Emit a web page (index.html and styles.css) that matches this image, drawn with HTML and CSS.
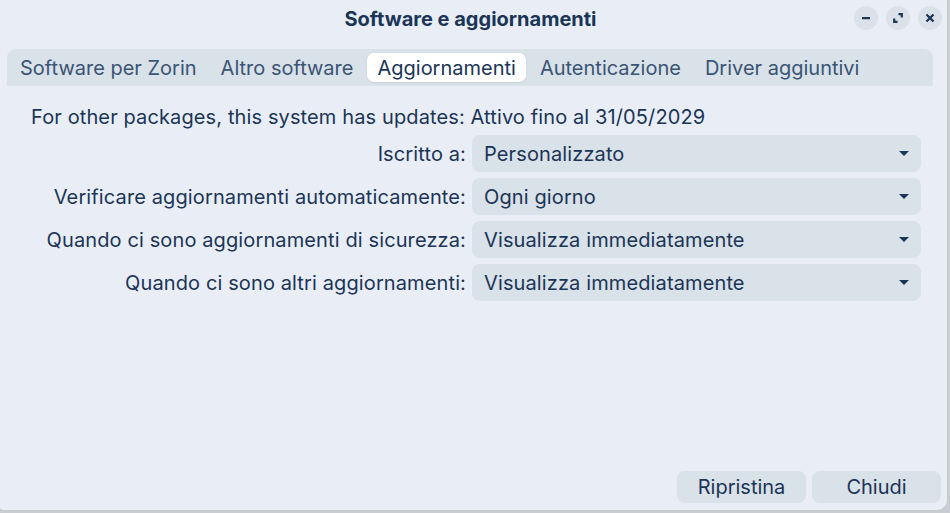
FILE: index.html
```html
<!DOCTYPE html>
<html lang="it">
<head>
<meta charset="utf-8">
<title>Software e aggiornamenti</title>
<link rel="stylesheet" href="styles.css">
</head>
<body>
<div class="window">
  <header class="titlebar">
    <div class="title">Software e aggiornamenti</div>
    <div class="wm-buttons">
      <span class="wm-btn"><svg width="12" height="12" viewBox="0 0 12 12"><rect x="2" y="5" width="8" height="2.2" fill="#1b3556"/></svg></span>
      <span class="wm-btn"><svg width="12" height="12" viewBox="0 0 12 12"><path d="M6.5 2.2H9.8V5.5M5.5 9.8H2.2V6.5" fill="none" stroke="#1b3556" stroke-width="2.2"/></svg></span>
      <span class="wm-btn"><svg width="12" height="12" viewBox="0 0 12 12"><path d="M2.5 2.5L9.5 9.5M9.5 2.5L2.5 9.5" fill="none" stroke="#1b3556" stroke-width="2.3"/></svg></span>
    </div>
  </header>
  <div class="notebook">
    <nav class="tabs">
      <span class="tab">Software per Zorin</span>
      <span class="tab">Altro software</span>
      <span class="tab active">Aggiornamenti</span>
      <span class="tab">Autenticazione</span>
      <span class="tab">Driver aggiuntivi</span>
    </nav>
    <section class="page">
      <div class="info">For other packages, this system has updates: Attivo fino al 31/05/2029</div>
      <div class="label">Iscritto a:</div>
      <div class="combo"><span>Personalizzato</span><i class="arrow"></i></div>
      <div class="label">Verificare aggiornamenti automaticamente:</div>
      <div class="combo"><span>Ogni giorno</span><i class="arrow"></i></div>
      <div class="label">Quando ci sono aggiornamenti di sicurezza:</div>
      <div class="combo"><span>Visualizza immediatamente</span><i class="arrow"></i></div>
      <div class="label">Quando ci sono altri aggiornamenti:</div>
      <div class="combo"><span>Visualizza immediatamente</span><i class="arrow"></i></div>
    </section>
  </div>
  <footer class="actions">
    <button class="btn">Ripristina</button>
    <button class="btn">Chiudi</button>
  </footer>
</div>
</body>
</html>
```
FILE: styles.css
```css
* { box-sizing: border-box; }
html, body { margin: 0; padding: 0; }
body {
  width: 950px;
  height: 513px;
  background: #c9cdd2;
  font-family: Inter, "Noto Sans", sans-serif;
  color: #1b3556;
  overflow: hidden;
}
.window {
  width: 947px;
  height: 510px;
  background: #e9eef6;
  border-radius: 0 0 10px 3px;
  display: flex;
  flex-direction: column;
}
.titlebar {
  height: 37px;
  display: flex;
  align-items: center;
  justify-content: center;
  position: relative;
}
.title {
  font-weight: 700;
  font-size: 20px;
  color: #1b3556;
  margin-left: -6px;
}
.wm-buttons {
  position: absolute;
  right: 5px;
  top: 6px;
  display: flex;
  gap: 8px;
}
.wm-btn {
  width: 24px;
  height: 24px;
  border-radius: 50%;
  background: #dae1e9;
  display: flex;
  align-items: center;
  justify-content: center;
}
.notebook {
  margin: 12px 14px 0 7px;
  display: flex;
  flex-direction: column;
}
.tabs {
  height: 37px;
  background: #d9e1e9;
  border-radius: 9px 9px 0 0;
  padding: 4px 1px;
  display: flex;
  align-items: stretch;
}
.tab {
  margin: 0 2px;
  padding: 0 10px;
  display: flex;
  align-items: center;
  font-size: 20px;
  color: #3a5474;
  border-radius: 7px;
}
.tab.active {
  background: #ffffff;
  color: #1b3556;
  box-shadow: 0 1px 2px rgba(0,0,0,0.08);
}
.page {
  padding: 19px 12px 0 24px;
  display: grid;
  grid-template-columns: 1fr 449px;
  column-gap: 6px;
  row-gap: 6px;
  align-items: center;
  font-size: 20px;
  letter-spacing: 0.12px;
}
.info {
  grid-column: 1 / 3;
  line-height: 24px;
}
.label {
  justify-self: end;
}
.combo {
  height: 37px;
  background: #d9e1e9;
  border-radius: 8px;
  padding: 0 12px;
  display: flex;
  align-items: center;
  justify-content: space-between;
}
.arrow {
  width: 0;
  height: 0;
  border-left: 5px solid transparent;
  border-right: 5px solid transparent;
  border-top: 5px solid #1b3556;
  margin-right: 0;
}
.actions {
  margin-top: auto;
  display: flex;
  justify-content: flex-end;
  gap: 6px;
  padding: 0 6px 7px 0;
}
.btn {
  width: 129px;
  height: 32px;
  border: none;
  border-radius: 8px;
  background: #d9e1e9;
  font-family: Inter, "Noto Sans", sans-serif;
  font-size: 20px;
  color: #1b3556;
  padding: 0;
}
```
